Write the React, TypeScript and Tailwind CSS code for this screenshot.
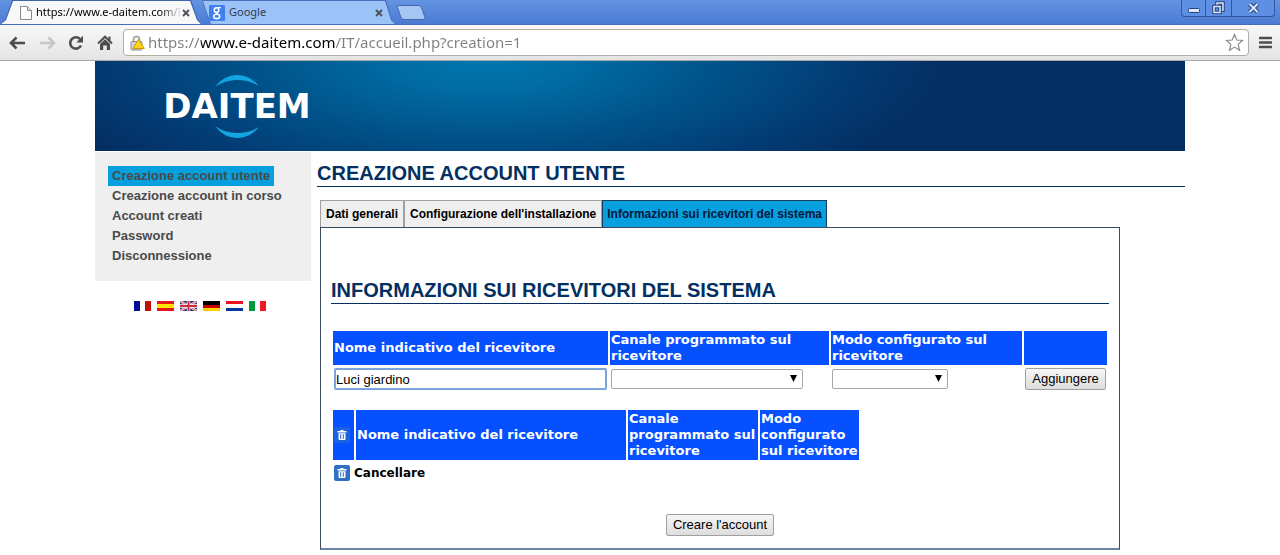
import { useState } from 'react';

const menuItems = [
    'Creazione account utente',
    'Creazione account in corso',
    'Account creati',
    'Password',
    'Disconnessione',
];

const tabs = ['Dati generali', "Configurazione dell'installazione", 'Informazioni sui ricevitori del sistema'];

function PageIcon() {
    return (
        <svg width="12" height="14" viewBox="0 0 12 14" className="shrink-0" aria-hidden="true">
            <path d="M.5.5h7l4 4v9H.5z" fill="#fff" stroke="#8a8a8a" />
            <path d="M7.5.5v4h4" fill="#e4e4e4" stroke="#8a8a8a" />
        </svg>
    );
}

function GoogleIcon() {
    return (
        <svg width="16" height="16" viewBox="0 0 16 16" className="shrink-0" aria-hidden="true">
            <rect width="16" height="16" rx="1" fill="#3f80ee" />
            <circle cx="7.5" cy="5" r="2.3" fill="none" stroke="#fff" strokeWidth="1.6" />
            <path d="M8 2.6h4M7.4 7.3c-.9 1 1 1.3 2 2.2" fill="none" stroke="#fff" strokeWidth="1.3" />
            <ellipse cx="7.7" cy="11.4" rx="3" ry="2.2" fill="none" stroke="#fff" strokeWidth="1.6" />
        </svg>
    );
}

function CloseIcon() {
    return (
        <svg width="8" height="8" viewBox="0 0 8 8" aria-hidden="true">
            <path d="M1 1l6 6M7 1L1 7" stroke="#4a4f58" strokeWidth="1.8" />
        </svg>
    );
}

function TrashIcon({ bg }: { bg: string }) {
    return (
        <svg width="16" height="16" viewBox="0 0 16 16" className="block" role="img" aria-label="Cancellare">
            <rect width="16" height="16" rx="2" fill={bg} />
            <path d="M6.5 3h3v1h3v1.500h-9V4h3z" fill="#fff" />
            <path d="M4.500 6.300h7v5.700a1 1 0 0 1-1 1h-5a1 1 0 0 1-1-1z" fill="#fff" />
            <path d="M6.700 7.300v4.500M9.300 7.300v4.500" stroke={bg} strokeWidth="1" />
        </svg>
    );
}

function WindowTitle() {
    return (
        <div className="flex h-[25px] items-start justify-between border-b border-[#456db5] bg-linear-to-b from-[#6493e2] to-[#4b7cd3] font-['Noto_Sans'] text-[11px]">
            <div className="flex h-6 min-w-0">
                <div className="w-[202px] bg-[#3e64ac] px-px pt-px [clip-path:polygon(0_100%,5px_84%,12px_0,191px_0,198px_84%,100%_100%)]">
                    <div className="flex h-full items-center bg-[#f8f8f8] pl-[19px] pr-[11px] [clip-path:polygon(0_100%,5px_84%,12px_0,189px_0,196px_84%,100%_100%)]">
                        <PageIcon />
                        <span className="ml-1 flex-1 whitespace-nowrap bg-linear-to-r from-black from-85% to-transparent bg-clip-text text-transparent">
                            https://www.e-daitem.com/I
                        </span>
                        <button aria-label="Chiudi scheda" className="shrink-0"><CloseIcon /></button>
                    </div>
                </div>
                <div className="w-[194px] bg-[#4a70b8] px-px pt-px [clip-path:polygon(0_0,184px_0,190px_84%,100%_100%,8px_100%)]">
                    <div className="flex h-full items-center bg-[#9bc3f8] pl-[6px] pr-[12px] text-[#333c4c] [clip-path:polygon(0_0,182px_0,188px_84%,100%_100%,8px_100%)]">
                        <GoogleIcon />
                        <span className="ml-1 flex-1">Google</span>
                        <button aria-label="Chiudi scheda"><CloseIcon /></button>
                    </div>
                </div>
                <button aria-label="Nuova scheda" className="mt-[5px] self-start">
                    <svg width="30" height="15" viewBox="0 0 30 15" className="block" aria-hidden="true">
                        <path d="M2.500.5h20q2 0 3 2l3.500 10q.5 2-1.500 2H8q-2 0-3-2L1.500 2.500Q1 .5 2.500.5z" fill="#a5c5f3" stroke="#4267ad" />
                    </svg>
                </button>
            </div>
            <div className="mr-[5px] flex h-[17px] divide-x divide-[#31569f] rounded-b-sm border border-t-0 border-[#31569f] bg-[#5d8fe2]">
                <button aria-label="Riduci" className="flex w-6 items-end justify-center pb-[3px]">
                    <svg width="12" height="5" viewBox="0 0 12 5" aria-hidden="true">
                        <rect x=".5" y=".5" width="11" height="4" rx="1" fill="#dce8fa" stroke="#27437f" />
                    </svg>
                </button>
                <button aria-label="Ripristina" className="flex w-[26px] items-center justify-center">
                    <svg width="13" height="14" viewBox="0 0 13 14" fill="none" aria-hidden="true">
                        <path d="M5 4V2h6v7H9" stroke="#27437f" strokeWidth="3.500" />
                        <path d="M5 4V2h6v7H9" stroke="#dce8fa" strokeWidth="1.500" />
                        <rect x="2" y="5.500" width="6" height="6" stroke="#27437f" strokeWidth="3.500" />
                        <rect x="2" y="5.500" width="6" height="6" stroke="#dce8fa" strokeWidth="1.500" />
                    </svg>
                </button>
                <button aria-label="Chiudi" className="flex w-[42px] items-center justify-center">
                    <svg width="13" height="12" viewBox="0 0 13 12" aria-hidden="true">
                        <path d="M2.500 2l8 8M10.500 2l-8 8" stroke="#27437f" strokeWidth="4" />
                        <path d="M2.500 2l8 8M10.500 2l-8 8" stroke="#dce8fa" strokeWidth="2" />
                    </svg>
                </button>
            </div>
        </div>
    );
}

function Toolbar() {
    const [url, setUrl] = useState('https://www.e-daitem.com/IT/accueil.php?creation=1');

    return (
        <div className="flex h-9 items-center border-b border-[#a9a9a9] bg-linear-to-b from-[#f8f8f8] to-[#e4e4e4] pl-[9px] pr-2">
            <button aria-label="Indietro" className="w-[30px]">
                <svg width="17" height="14" viewBox="0 0 17 14" fill="none" aria-hidden="true">
                    <path d="M7.500 1.500L2 7l5.500 5.500M2.500 7H16" stroke="#4d4d4d" strokeWidth="2.600" />
                </svg>
            </button>
            <button aria-label="Avanti" className="w-[29px]">
                <svg width="17" height="14" viewBox="0 0 17 14" fill="none" aria-hidden="true">
                    <path d="M9.500 1.500L15 7l-5.500 5.500M14.500 7H1" stroke="#c6c6c6" strokeWidth="2.600" />
                </svg>
            </button>
            <button aria-label="Ricarica" className="w-[29px]">
                <svg width="16" height="16" viewBox="0 0 16 16" fill="none" aria-hidden="true">
                    <path d="M13 10.500A5.700 5.700 0 1 1 12 4" stroke="#4d4d4d" strokeWidth="2.600" />
                    <path d="M15 .8v6.700H8.300z" fill="#4d4d4d" />
                </svg>
            </button>
            <button aria-label="Pagina iniziale" className="w-[26px]">
                <svg width="16" height="16" viewBox="0 0 16 16" aria-hidden="true">
                    <path d="M3 9l5-4.800L13 9v6H9.800v-4.500H6.200V15H3z" fill="#4d4d4d" />
                    <path d="M1 8.500l7-6.800 7 6.800" fill="none" stroke="#4d4d4d" strokeWidth="2" />
                    <path d="M11.500 1.500h2V6l-2-2z" fill="#4d4d4d" />
                </svg>
            </button>
            <div className="flex h-[27px] min-w-0 flex-1 items-center rounded-sm border border-[#b3aca2] bg-white pl-[6px] pr-1">
                <svg width="15" height="16" viewBox="0 0 15 16" className="shrink-0" aria-hidden="true">
                    <path d="M3.500 7V4.500a3 3 0 0 1 6 0V7" fill="none" stroke="#999" strokeWidth="1.500" />
                    <rect x="1" y="6.500" width="11" height="8.500" rx="1" fill="#d5d5d5" stroke="#8c8c8c" />
                    <path d="M8.500 4.200l5.800 9.300H3z" fill="#ffd31a" stroke="#d19a00" strokeLinejoin="round" />
                </svg>
                <input
                    aria-label="Indirizzo"
                    type="text"
                    value={url}
                    onChange={(e) => setUrl(e.target.value)}
                    className="ml-[3px] min-w-0 flex-1 bg-[linear-gradient(90deg,#808080_53px,#000_53px,#000_187px,#808080_187px)] bg-clip-text font-['Noto_Sans'] text-[15px] text-transparent caret-black outline-none"
                />
                <svg width="19" height="19" viewBox="0 0 19 19" className="shrink-0" aria-hidden="true">
                    <path d="M9.500 1.500l2.300 5.500 5.700.5-4.300 3.900 1.300 5.800-5-3.100-5 3.100 1.300-5.800L1.500 7.500 7.200 7z" fill="#fff" stroke="#8b8b8b" strokeWidth="1.200" />
                </svg>
            </div>
            <button aria-label="Menu" className="ml-2.5">
                <svg width="13" height="13" viewBox="0 0 13 13" className="block" aria-hidden="true">
                    <path d="M1 2h11M1 6.500h11M1 11h11" stroke="#4d4d4d" strokeWidth="2.600" strokeLinecap="round" />
                </svg>
            </button>
        </div>
    );
}

function Banner() {
    return (
        <header className="h-[90px] bg-[#032f63] bg-[radial-gradient(ellipse_460px_150px_at_390px_0,#0076ae_0%,#006ca3_20%,#00538a_50%,#033b74_80%,#032f63_100%)] pl-[66px] pt-3.5">
            <div className="flex w-[152px] flex-col items-center">
                <svg width="44" height="12" viewBox="0 0 44 12" aria-hidden="true">
                    <path d="M0 12Q9 0 22 0t22 11Q34 5 22 5T0 12z" fill="#12a5df" />
                </svg>
                <span className="text-[34px] font-bold leading-[39px] text-white">DAITEM</span>
                <svg width="44" height="12" viewBox="0 0 44 12" aria-hidden="true">
                    <path d="M0 0Q9 12 22 12T44 1Q34 7 22 7T0 0z" fill="#12a5df" />
                </svg>
            </div>
        </header>
    );
}

function Flags() {
    return (
        <div className="mt-5 flex gap-1.5 pl-[39px]">
            <a href="#fr" aria-label="Français">
                <svg width="17" height="10" viewBox="0 0 17 10" className="block">
                    <path d="M0 0h6v10H0z" fill="#000c98" /><path d="M6 0h5v10H6z" fill="#fff" /><path d="M11 0h6v10h-6z" fill="#c01008" />
                </svg>
            </a>
            <a href="#es" aria-label="Español">
                <svg width="17" height="10" viewBox="0 0 17 10" className="block">
                    <path d="M0 0h17v10H0z" fill="#e8141c" /><path d="M0 3h17v4H0z" fill="#ffe600" />
                </svg>
            </a>
            <a href="#en" aria-label="English">
                <svg width="17" height="10" viewBox="0 0 17 10" className="block">
                    <path d="M0 0h17v10H0z" fill="#2a2c72" />
                    <path d="M0 0l17 10M17 0L0 10" stroke="#fff" strokeWidth="2.200" />
                    <path d="M0 0l17 10M17 0L0 10" stroke="#d0283c" strokeWidth=".8" />
                    <path d="M8.500 0v10M0 5h17" stroke="#fff" strokeWidth="3.400" />
                    <path d="M8.500 0v10M0 5h17" stroke="#d0283c" strokeWidth="2" />
                </svg>
            </a>
            <a href="#de" aria-label="Deutsch">
                <svg width="17" height="10" viewBox="0 0 17 10" className="block">
                    <path d="M0 0h17v4H0z" fill="#000" /><path d="M0 4h17v3H0z" fill="#c80000" /><path d="M0 7h17v3H0z" fill="#ffd400" />
                </svg>
            </a>
            <a href="#nl" aria-label="Nederlands">
                <svg width="17" height="10" viewBox="0 0 17 10" className="block">
                    <path d="M0 0h17v3H0z" fill="#f01020" /><path d="M0 3h17v4H0z" fill="#fff" /><path d="M0 7h17v3H0z" fill="#0038a0" />
                </svg>
            </a>
            <a href="#it" aria-label="Italiano">
                <svg width="17" height="10" viewBox="0 0 17 10" className="block">
                    <path d="M0 0h6v10H0z" fill="#009a38" /><path d="M6 0h5v10H6z" fill="#fff" /><path d="M11 0h6v10h-6z" fill="#f01828" />
                </svg>
            </a>
        </div>
    );
}

function Sidebar() {
    return (
        <aside className="w-[216px] shrink-0">
            <nav className="bg-[#efefef] pb-[15px] pl-[13px] pt-3.5">
                <ul>
                    {menuItems.map((item, index) => (
                        <li key={item} className="flex">
                            <a
                                href="#menu"
                                className={`whitespace-nowrap px-1 font-['Liberation_Sans'] text-[13px] font-bold leading-5 text-[#4a4a4a] ${index === 0 ? 'bg-[#06a0de]' : ''}`}
                            >
                                {item}
                            </a>
                        </li>
                    ))}
                </ul>
            </nav>
            <Flags />
        </aside>
    );
}

function Select({ label, className }: { label: string; className: string }) {
    return (
        <div className={`relative ${className}`}>
            <select aria-label={label} className="block h-5 w-full appearance-none rounded-[2px] border border-[#a6a6a6] bg-white outline-none">
                <option value=""></option>
            </select>
            <svg width="7" height="7" viewBox="0 0 7 7" className="pointer-events-none absolute right-1.5 top-1.5" aria-hidden="true">
                <path d="M0 0h7L3.500 7z" fill="#000" />
            </svg>
        </div>
    );
}

const buttonClass = 'h-[22px] rounded-[2px] border border-[#a0a0a0] bg-linear-to-b from-[#f6f6f6] to-[#dddddd] font-[\'Liberation_Sans\'] text-[13px] text-black whitespace-nowrap';
const headClass = 'bg-[#0650ff] p-px text-left align-middle font-bold text-white';

function ReceiverForm() {
    const [name, setName] = useState('Luci giardino');

    return (
        <section className="w-full max-w-[800px] border border-b-2 border-[#3b4a5e] border-b-[#7083a3] px-2.5 pb-3 pt-[49px]">
            <h2 className="border-b border-[#033060] font-['Liberation_Sans'] text-xl leading-[26px] font-bold text-[#033060]">
                INFORMAZIONI SUI RICEVITORI DEL SISTEMA
            </h2>

            <table className="mt-[25px] w-full table-fixed border-separate border-spacing-[2px] text-[13px] leading-4">
                <colgroup>
                    <col />
                    <col className="w-[219px]" />
                    <col className="w-[191px]" />
                    <col className="w-[83px]" />
                </colgroup>
                <thead>
                    <tr>
                        <th className={headClass}>Nome indicativo del ricevitore</th>
                        <th className={headClass}>Canale programmato sul ricevitore</th>
                        <th className={headClass}>Modo configurato sul ricevitore</th>
                        <th className={headClass}></th>
                    </tr>
                </thead>
                <tbody>
                    <tr>
                        <td className="p-px">
                            <input
                                aria-label="Nome indicativo del ricevitore"
                                type="text"
                                value={name}
                                onChange={(e) => setName(e.target.value)}
                                className="block h-[22px] w-full rounded-[2px] border-2 border-[#7ba3dc] bg-white font-['Liberation_Sans'] text-[13px] text-black outline-none"
                            />
                        </td>
                        <td className="p-px"><Select label="Canale programmato sul ricevitore" className="w-48" /></td>
                        <td className="p-px"><Select label="Modo configurato sul ricevitore" className="w-[116px]" /></td>
                        <td className="p-px"><button className={`w-full ${buttonClass}`}>Aggiungere</button></td>
                    </tr>
                </tbody>
            </table>

            <table className="mt-[15px] w-[530px] table-fixed border-separate border-spacing-[2px] text-[13px] leading-4">
                <colgroup>
                    <col className="w-[21px]" />
                    <col />
                    <col className="w-[130px]" />
                    <col className="w-[99px]" />
                </colgroup>
                <thead>
                    <tr>
                        <th className={headClass}><TrashIcon bg="#1b62e0" /></th>
                        <th className={headClass}>Nome indicativo del ricevitore</th>
                        <th className={headClass}>Canale programmato sul ricevitore</th>
                        <th className={headClass}>Modo configurato sul ricevitore</th>
                    </tr>
                </thead>
            </table>
            <button className="ml-[3px] mt-[3px] flex gap-1 text-xs font-bold leading-4 text-black">
                <TrashIcon bg="#2f70c4" />
                Cancellare
            </button>

            <div className="mt-[33px] flex justify-center">
                <button className={`px-1.5 ${buttonClass}`}>Creare l'account</button>
            </div>
        </section>
    );
}

export default function App() {
    const [activeTab, setActiveTab] = useState(2);

    return (
        <div className="min-h-screen bg-white font-['DejaVu_Sans',sans-serif]">
            <WindowTitle />
            <Toolbar />
            <div className="mx-auto max-w-[1090px]">
                <Banner />
                <div className="mt-px flex gap-1.5">
                    <Sidebar />
                    <main className="min-w-0 flex-1 pt-2">
                        <h1 className="border-b border-[#033060] font-['Liberation_Sans'] text-xl leading-[26px] font-bold text-[#033060]">
                            CREAZIONE ACCOUNT UTENTE
                        </h1>
                        <div className="ml-[3px] mt-[13px]">
                            <div role="tablist" className="flex h-[27px]">
                                {tabs.map((tab, index) => (
                                    <button
                                        key={tab}
                                        role="tab"
                                        aria-selected={index === activeTab}
                                        onClick={() => setActiveTab(index)}
                                        className={`whitespace-nowrap border border-b-0 font-['Liberation_Sans'] text-xs font-bold ${
                                            index === activeTab
                                                ? 'border-[#12405e] bg-[#06a0de] px-1 text-[#03183a]'
                                                : 'border-[#a0a0a0] bg-[#efefef] px-[5px] text-black'
                                        }`}
                                    >
                                        {tab}
                                    </button>
                                ))}
                            </div>
                            <ReceiverForm />
                        </div>
                    </main>
                </div>
            </div>
        </div>
    );
}
